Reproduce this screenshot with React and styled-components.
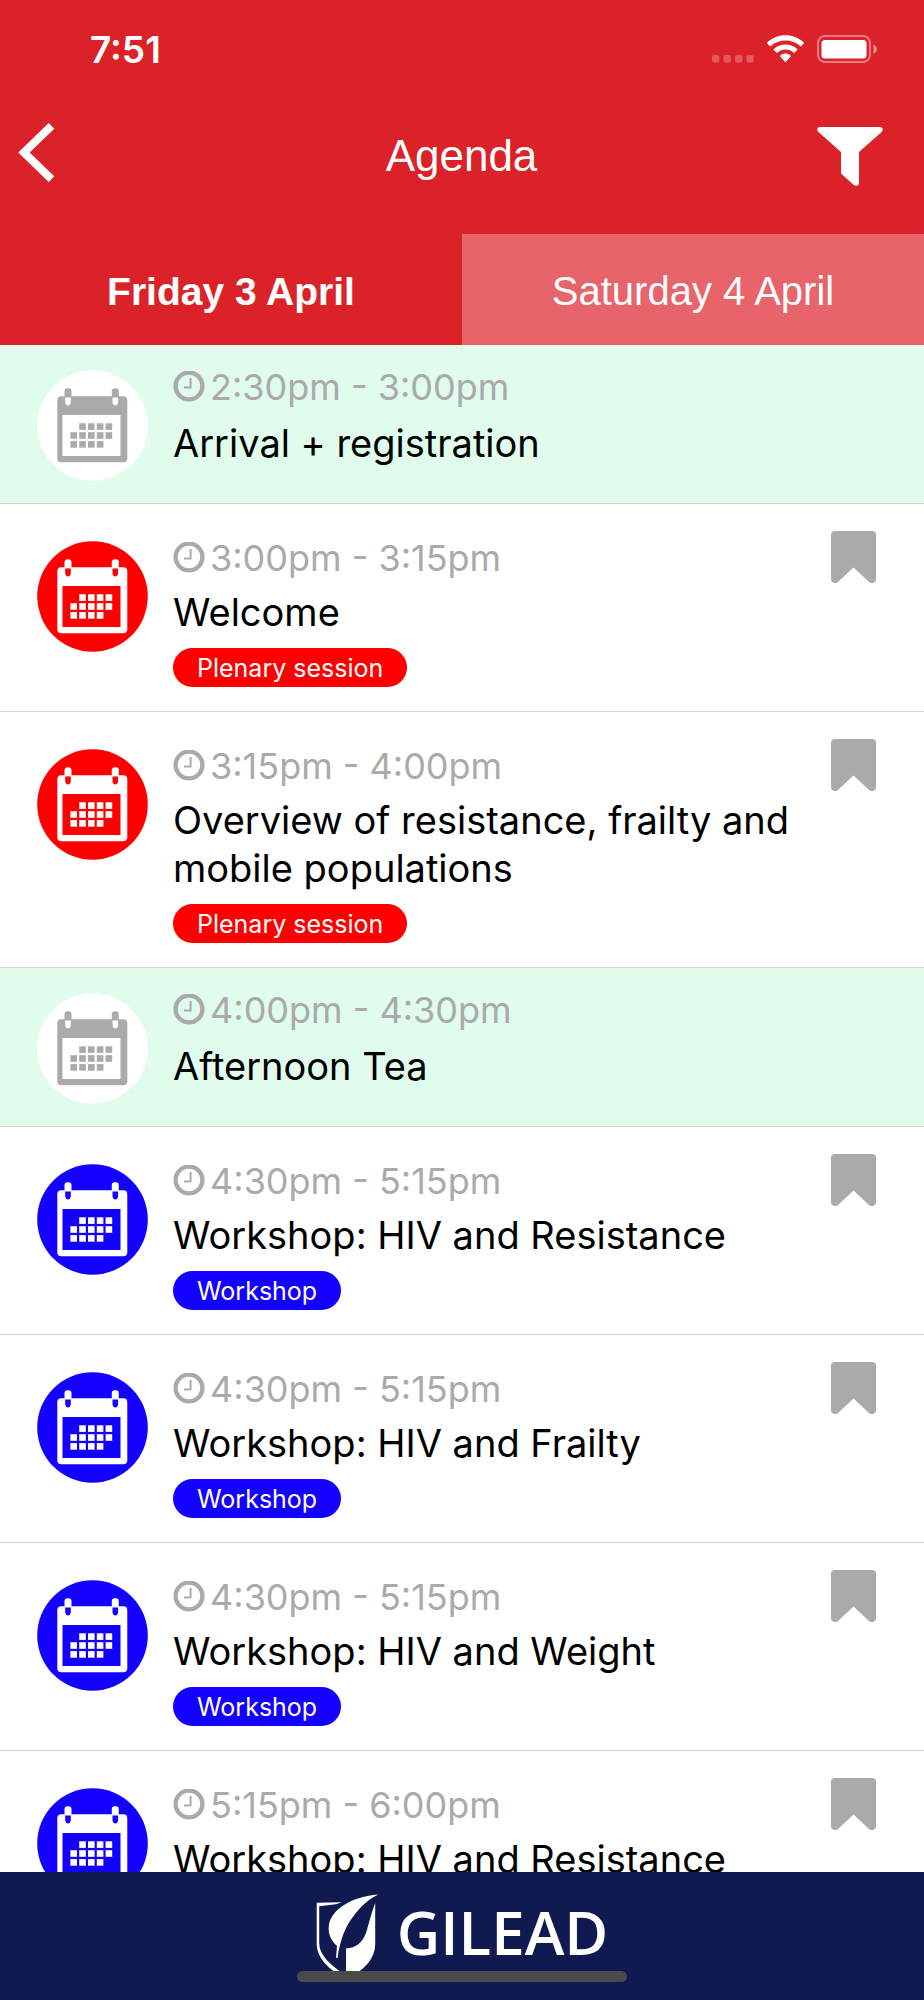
import React from 'react'
import styled, { createGlobalStyle } from 'styled-components'

const GlobalStyle = createGlobalStyle`
  * {
    box-sizing: border-box;
  }
  body {
    margin: 0;
    font-family: Inter, "Liberation Sans", sans-serif;
    color: #000;
    background: #fff;
  }
  button {
    margin: 0;
    padding: 0;
    border: 0;
    background: none;
    color: inherit;
    cursor: pointer;
  }
  svg {
    display: block;
  }
`

const Screen = styled.div`
  display: flex;
  flex-direction: column;
  height: 100vh;
`

const Header = styled.header`
  flex: none;
  color: #fff;
  background: #dc2229;
`

const StatusBar = styled.div`
  display: flex;
  align-items: center;
  justify-content: space-between;
  height: 98px;
  padding: 0 47px 0 90px;
  font-size: 37px;
  font-weight: 600;
`

const StatusIcons = styled.div`
  display: flex;
  align-items: center;
  gap: 13px;
`

const NavBar = styled.div`
  display: grid;
  grid-template-columns: 1fr auto 1fr;
  align-items: start;
  height: 136px;
  padding: 25px 41px 0 18px;
`

const NavButton = styled.button`
  justify-self: ${({ $side }) => $side};
  padding-top: ${({ $side }) => ($side === 'end' ? 4 : 0)}px;
`

const Title = styled.h1`
  margin: 0;
  padding: 8px 0 0 22px;
  font-family: "Liberation Sans", sans-serif;
  font-size: 44px;
  font-weight: 400;
  line-height: 50px;
`

const Tabs = styled.nav`
  display: grid;
  grid-template-columns: 1fr 1fr;
`

const Tab = styled.button`
  && {
    height: 111px;
    padding-top: 4px;
    font-family: "Liberation Sans", sans-serif;
    font-size: ${({ $active }) => ($active ? 39 : 40)}px;
    font-weight: ${({ $active }) => ($active ? 700 : 400)};
    background: ${({ $active }) => ($active ? 'transparent' : '#e7646a')};
  }
`

const List = styled.ul`
  flex: 1;
  min-height: 0;
  margin: 0;
  padding: 0;
  list-style: none;
  overflow-y: auto;
  scrollbar-width: none;
`

const Row = styled.li`
  display: flex;
  align-items: flex-start;
  padding: ${({ $plain }) => ($plain ? '19px 48px 36px 37px' : '27px 48px 24px 37px')};
  border-bottom: 1px solid #d2d4d3;
  background: ${({ $plain }) => ($plain ? '#dffcec' : '#fff')};
  .calendar {
    flex: none;
    margin: ${({ $plain }) => ($plain ? 6 : 10)}px 25px -30px 0;
  }
`

const Content = styled.div`
  flex: 1;
  min-width: 0;
  padding-top: ${({ $plain }) => ($plain ? 0 : 4)}px;
`

const Time = styled.div`
  display: flex;
  align-items: center;
  gap: 5px;
  font-size: 36px;
  line-height: 46px;
  color: #aaa;
`

const Name = styled.h2`
  margin: ${({ $plain }) => ($plain ? 9 : 7)}px 0 0;
  font-size: 38px;
  font-weight: 400;
  line-height: 48px;
`

const Badge = styled.span`
  display: block;
  width: fit-content;
  height: 39px;
  margin-top: 12px;
  padding: 0 24px;
  border-radius: 20px;
  font-size: 25px;
  line-height: 40px;
  color: #fff;
  background: ${({ color }) => color};
`

const BookmarkButton = styled.button`
  flex: none;
  margin-left: 20px;
`

const Footer = styled.footer`
  position: relative;
  flex: none;
  display: flex;
  justify-content: center;
  gap: 18px;
  height: 128px;
  padding-top: 22px;
  color: #fff;
  background: #101a50;
`

const Wordmark = styled.span`
  font-family: "Open Sans", sans-serif;
  font-size: 60px;
  font-weight: 600;
  line-height: 76px;
`

const HomeIndicator = styled.div`
  position: absolute;
  bottom: 18px;
  left: 50%;
  width: 330px;
  height: 11px;
  margin-left: -165px;
  border-radius: 6px;
  background: #4a4a4a;
`

const SignalIcon = () => (
  <svg width='42' height='28' viewBox='0 0 42 28' fill='#fff' fillOpacity='0.25'>
    {[0, 11.5, 23, 34.4].map((x) => (
      <rect key={x} x={x} y='20' width='7.4' height='7.6' rx='2' />
    ))}
  </svg>
)

const WifiIcon = () => (
  <svg width='37' height='28' viewBox='0 0 37 28' fill='#fff'>
    <path d='M18.5 0.3C25.600 .3 32 3 36.700 7.400q.6.600 0 1.200l-2.300 2.500q-.6.500-1.200 0C29.200 7.500 24 5.600 18.500 5.600S7.800 7.500 3.800 11.100q-.6.500-1.200 0L.3 8.600q-.6-.6 0-1.200C5 3 11.400.3 18.500.3z' />
    <path d='M18.500 9.400c4.500 0 8.600 1.700 11.700 4.500q.6.600 0 1.200l-2.500 2.500q-.5.500-1.100 0c-2.200-1.900-5-3-8.100-3s-5.900 1.100-8.100 3q-.6.500-1.100 0l-2.500-2.500q-.6-.6 0-1.200c3.100-2.800 7.200-4.500 11.700-4.500z' />
    <path d='M18.500 18.600c1.900 0 3.700.6 5.100 1.800q.6.500 0 1.100l-4.500 5.300q-.6.600-1.200 0l-4.500-5.300q-.6-.6 0-1.100c1.400-1.200 3.200-1.800 5.100-1.800z' />
  </svg>
)

const BatteryIcon = () => (
  <svg width='60' height='28' viewBox='0 0 60 28'>
    <rect x='1' y='1' width='52' height='26' rx='7' fill='none' stroke='#fff' strokeOpacity='0.4' strokeWidth='2' />
    <rect x='4.500' y='5' width='45' height='18.500' rx='3.500' fill='#fff' />
    <path d='M56.500 9.500c4.300 2 4.300 7.500 0 9.500z' fill='#fff' fillOpacity='0.5' />
  </svg>
)

const BackIcon = () => (
  <svg width='37' height='59' viewBox='0 0 37 59' fill='none' stroke='#fff' strokeWidth='8'>
    <path d='M33.500 2.800L6 29.500l27.500 26.700' />
  </svg>
)

const FilterIcon = () => (
  <svg width='66' height='59' viewBox='0 0 66 59' fill='#fff'>
    <path d='M3 0h60c2.800 0 3.600 3 1.600 5L42 25v30.500c0 3.200-3 4.200-5.500 2.300L24 46.500V25L1.400 5C-.6 3 .2 0 3 0z' />
  </svg>
)

const ClockIcon = () => (
  <svg width='32' height='32' viewBox='0 0 32 32' fill='none' stroke='#aaa'>
    <circle cx='16' cy='15' r='13.400' strokeWidth='4.400' />
    <path d='M17.600 7v10.300M18.600 16.400h-7.600' strokeWidth='2' />
  </svg>
)

const BookmarkIcon = () => (
  <svg width='45' height='52' viewBox='0 0 45 52' fill='#aaa'>
    <path d='M4 0h37a4 4 0 0 1 4 4v44c0 3.800-4 5.200-7 3L22.500 36.500 7 51c-3 2.200-7 .8-7-3V4a4 4 0 0 1 4-4z' />
  </svg>
)

const days = [
  [1, 2, 3, 4],
  [0, 1, 2, 3, 4],
  [0, 1, 2, 3]
]

const CalendarIcon = ({ back, front }) => (
  <svg className='calendar' width='111' height='111' viewBox='0 0 111 111'>
    <circle cx='55.500' cy='55.500' r='55.300' fill={back} />
    <rect x='20.300' y='26.300' width='70' height='66' rx='4' fill={front} />
    <rect x='25.500' y='45' width='58' height='41' fill={back} />
    {[27.500, 74.800].map((x) => (
      <g key={x}>
        <rect x={x} y='18.300' width='7' height='10' rx='3' fill={front} />
        <path d={`M${x + 0.7} 27.500h5.600v4.500c0 4.600-5.600 4.600-5.600 0z`} fill={back} />
      </g>
    ))}
    {days.map((cols, row) =>
      cols.map((col) => (
        <rect key={`${row}-${col}`} x={33.4 + col * 8.8} y={53.3 + row * 8.9} width='6.600' height='6.600' fill={front} />
      ))
    )}
  </svg>
)

const ShieldLogo = () => (
  <svg width='63' height='88' viewBox='0 0 63 88' fill='#fff'>
    <path d='M.700 8.700L26 8.300 20 10.300 3.200 12.300V49C3.200 61 14 71 31 82v3C12 76 .7 63 .7 50z' />
    <path d='M62.300.500C50 6 37 20 30 34c-4 8-7 19-8.500 30.500L20 63.500 21 52C14.500 46 12 39 12.800 32 15 15 36 2.500 62.300.500z' />
    <path d='M59.200 9v41c0 14-10 26-29.200 35.500V54.500c10-.5 17-6 20.500-17C53 29 56 17 59.200 9z' />
  </svg>
)

const themes = {
  plain: { back: '#fff', front: '#aaa' },
  plenary: { back: '#f00', front: '#fff' },
  workshop: { back: '#1400ff', front: '#fff' }
}

const sessions = [
  { type: 'plain', time: '2:30pm - 3:00pm', name: 'Arrival + registration' },
  { type: 'plenary', time: '3:00pm - 3:15pm', name: 'Welcome', label: 'Plenary session' },
  {
    type: 'plenary',
    time: '3:15pm - 4:00pm',
    name: 'Overview of resistance, frailty and mobile populations',
    label: 'Plenary session'
  },
  { type: 'plain', time: '4:00pm - 4:30pm', name: 'Afternoon Tea' },
  { type: 'workshop', time: '4:30pm - 5:15pm', name: 'Workshop: HIV and Resistance', label: 'Workshop' },
  { type: 'workshop', time: '4:30pm - 5:15pm', name: 'Workshop: HIV and Frailty', label: 'Workshop' },
  { type: 'workshop', time: '4:30pm - 5:15pm', name: 'Workshop: HIV and Weight', label: 'Workshop' },
  { type: 'workshop', time: '5:15pm - 6:00pm', name: 'Workshop: HIV and Resistance' }
]

const Session = (props) => {
  const { type, time, name, label } = props
  const { back, front } = themes[type]
  const plain = type === 'plain'
  return (
    <Row $plain={plain}>
      <CalendarIcon back={back} front={front} />
      <Content $plain={plain}>
        <Time>
          <ClockIcon />
          {time}
        </Time>
        <Name $plain={plain}>{name}</Name>
        {label && <Badge color={back}>{label}</Badge>}
      </Content>
      {!plain && (
        <BookmarkButton aria-label='Bookmark'>
          <BookmarkIcon />
        </BookmarkButton>
      )}
    </Row>
  )
}

const App = () => {
  return (
    <Screen>
      <GlobalStyle />
      <Header>
        <StatusBar>
          <span>7:51</span>
          <StatusIcons>
            <SignalIcon />
            <WifiIcon />
            <BatteryIcon />
          </StatusIcons>
        </StatusBar>
        <NavBar>
          <NavButton $side='start' aria-label='Back'>
            <BackIcon />
          </NavButton>
          <Title>Agenda</Title>
          <NavButton $side='end' aria-label='Filter'>
            <FilterIcon />
          </NavButton>
        </NavBar>
        <Tabs>
          <Tab $active>Friday 3 April</Tab>
          <Tab>Saturday 4 April</Tab>
        </Tabs>
      </Header>
      <List>
        {sessions.map((session, i) => (
          <Session key={i} {...session} />
        ))}
      </List>
      <Footer>
        <ShieldLogo />
        <Wordmark>GILEAD</Wordmark>
        <HomeIndicator />
      </Footer>
    </Screen>
  )
}

export default App
